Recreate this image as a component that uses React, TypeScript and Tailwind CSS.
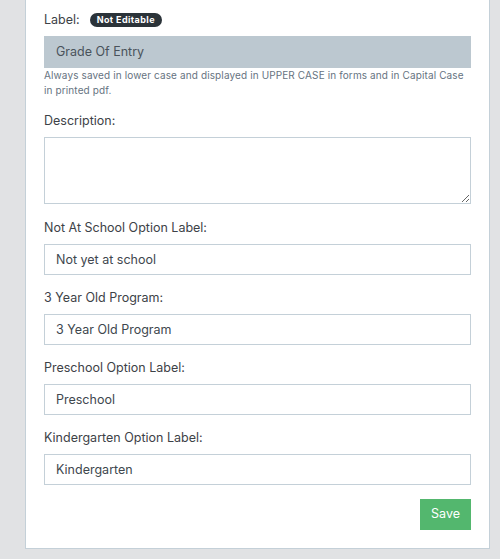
import React, { useState } from 'react';

interface Field {
  id: string;
  label: string;
  value: string;
}

const fields: Field[] = [
  { id: 'notAtSchool', label: 'Not At School Option Label:', value: 'Not yet at school' },
  { id: 'threeYearOld', label: '3 Year Old Program:', value: '3 Year Old Program' },
  { id: 'preschool', label: 'Preschool Option Label:', value: 'Preschool' },
  { id: 'kindergarten', label: 'Kindergarten Option Label:', value: 'Kindergarten' },
];

const App: React.FC = () => {
  const [values, setValues] = useState<Record<string, string>>(
    Object.fromEntries(fields.map((f) => [f.id, f.value]))
  );
  const [description, setDescription] = useState('');

  return (
    <div
      className="min-h-[559px] bg-[#e1e2e4] pl-[25px] pr-[10px] pb-[10px]"
      style={{ fontFamily: 'Inter, "Noto Sans", sans-serif' }}
    >
      <div className="bg-white border-x border-b border-[#c4d0d8] px-[18px] pt-3 pb-[18px]">
        {/* Label (read only) */}
        <div className="flex items-center h-4 text-[12.5px] leading-4 text-[#3d4247]">
          <span>Label:</span>
          <span className="ml-[10px] inline-flex items-center h-[14px] px-[7px] rounded-full bg-[#2b3339] text-white text-[9px] font-bold tracking-[0.4px]">
            Not Editable
          </span>
        </div>
        <div className="mt-2 h-8 bg-[#bcc8d0] flex items-center px-3 text-[12.5px] text-[#4a535b]">
          Grade Of Entry
        </div>
        <p className="text-[10px] leading-[15px] tracking-[0.12px] text-[#66737f]">
          Always saved in lower case and displayed in UPPER CASE in forms and in Capital Case in printed pdf.
        </p>

        {/* Description */}
        <label className="block mt-[15px] text-[12.5px] leading-4 text-[#3d4247]">Description:</label>
        <textarea
          value={description}
          onChange={(e) => setDescription(e.target.value)}
          className="mt-2 block w-full h-[67px] border border-[#c4d0d8] text-[12.5px] px-3 py-2 outline-none"
        />

        {fields.map((f, i) => (
          <div key={f.id} className={i === 0 ? 'mt-4' : 'mt-[15px]'}>
            <label className="block text-[12.5px] leading-4 text-[#3d4247]">{f.label}</label>
            <input
              value={values[f.id]}
              onChange={(e) => setValues({ ...values, [f.id]: e.target.value })}
              className="mt-2 block w-full h-[31px] border border-[#c4d0d8] px-[11px] text-[12.5px] text-[#40474e] outline-none"
            />
          </div>
        ))}

        <div className="flex justify-end mt-[14px]">
          <button className="h-[31px] w-[51px] bg-[#53b76e] text-white text-[12.5px]">Save</button>
        </div>
      </div>
    </div>
  );
};

export default App;
